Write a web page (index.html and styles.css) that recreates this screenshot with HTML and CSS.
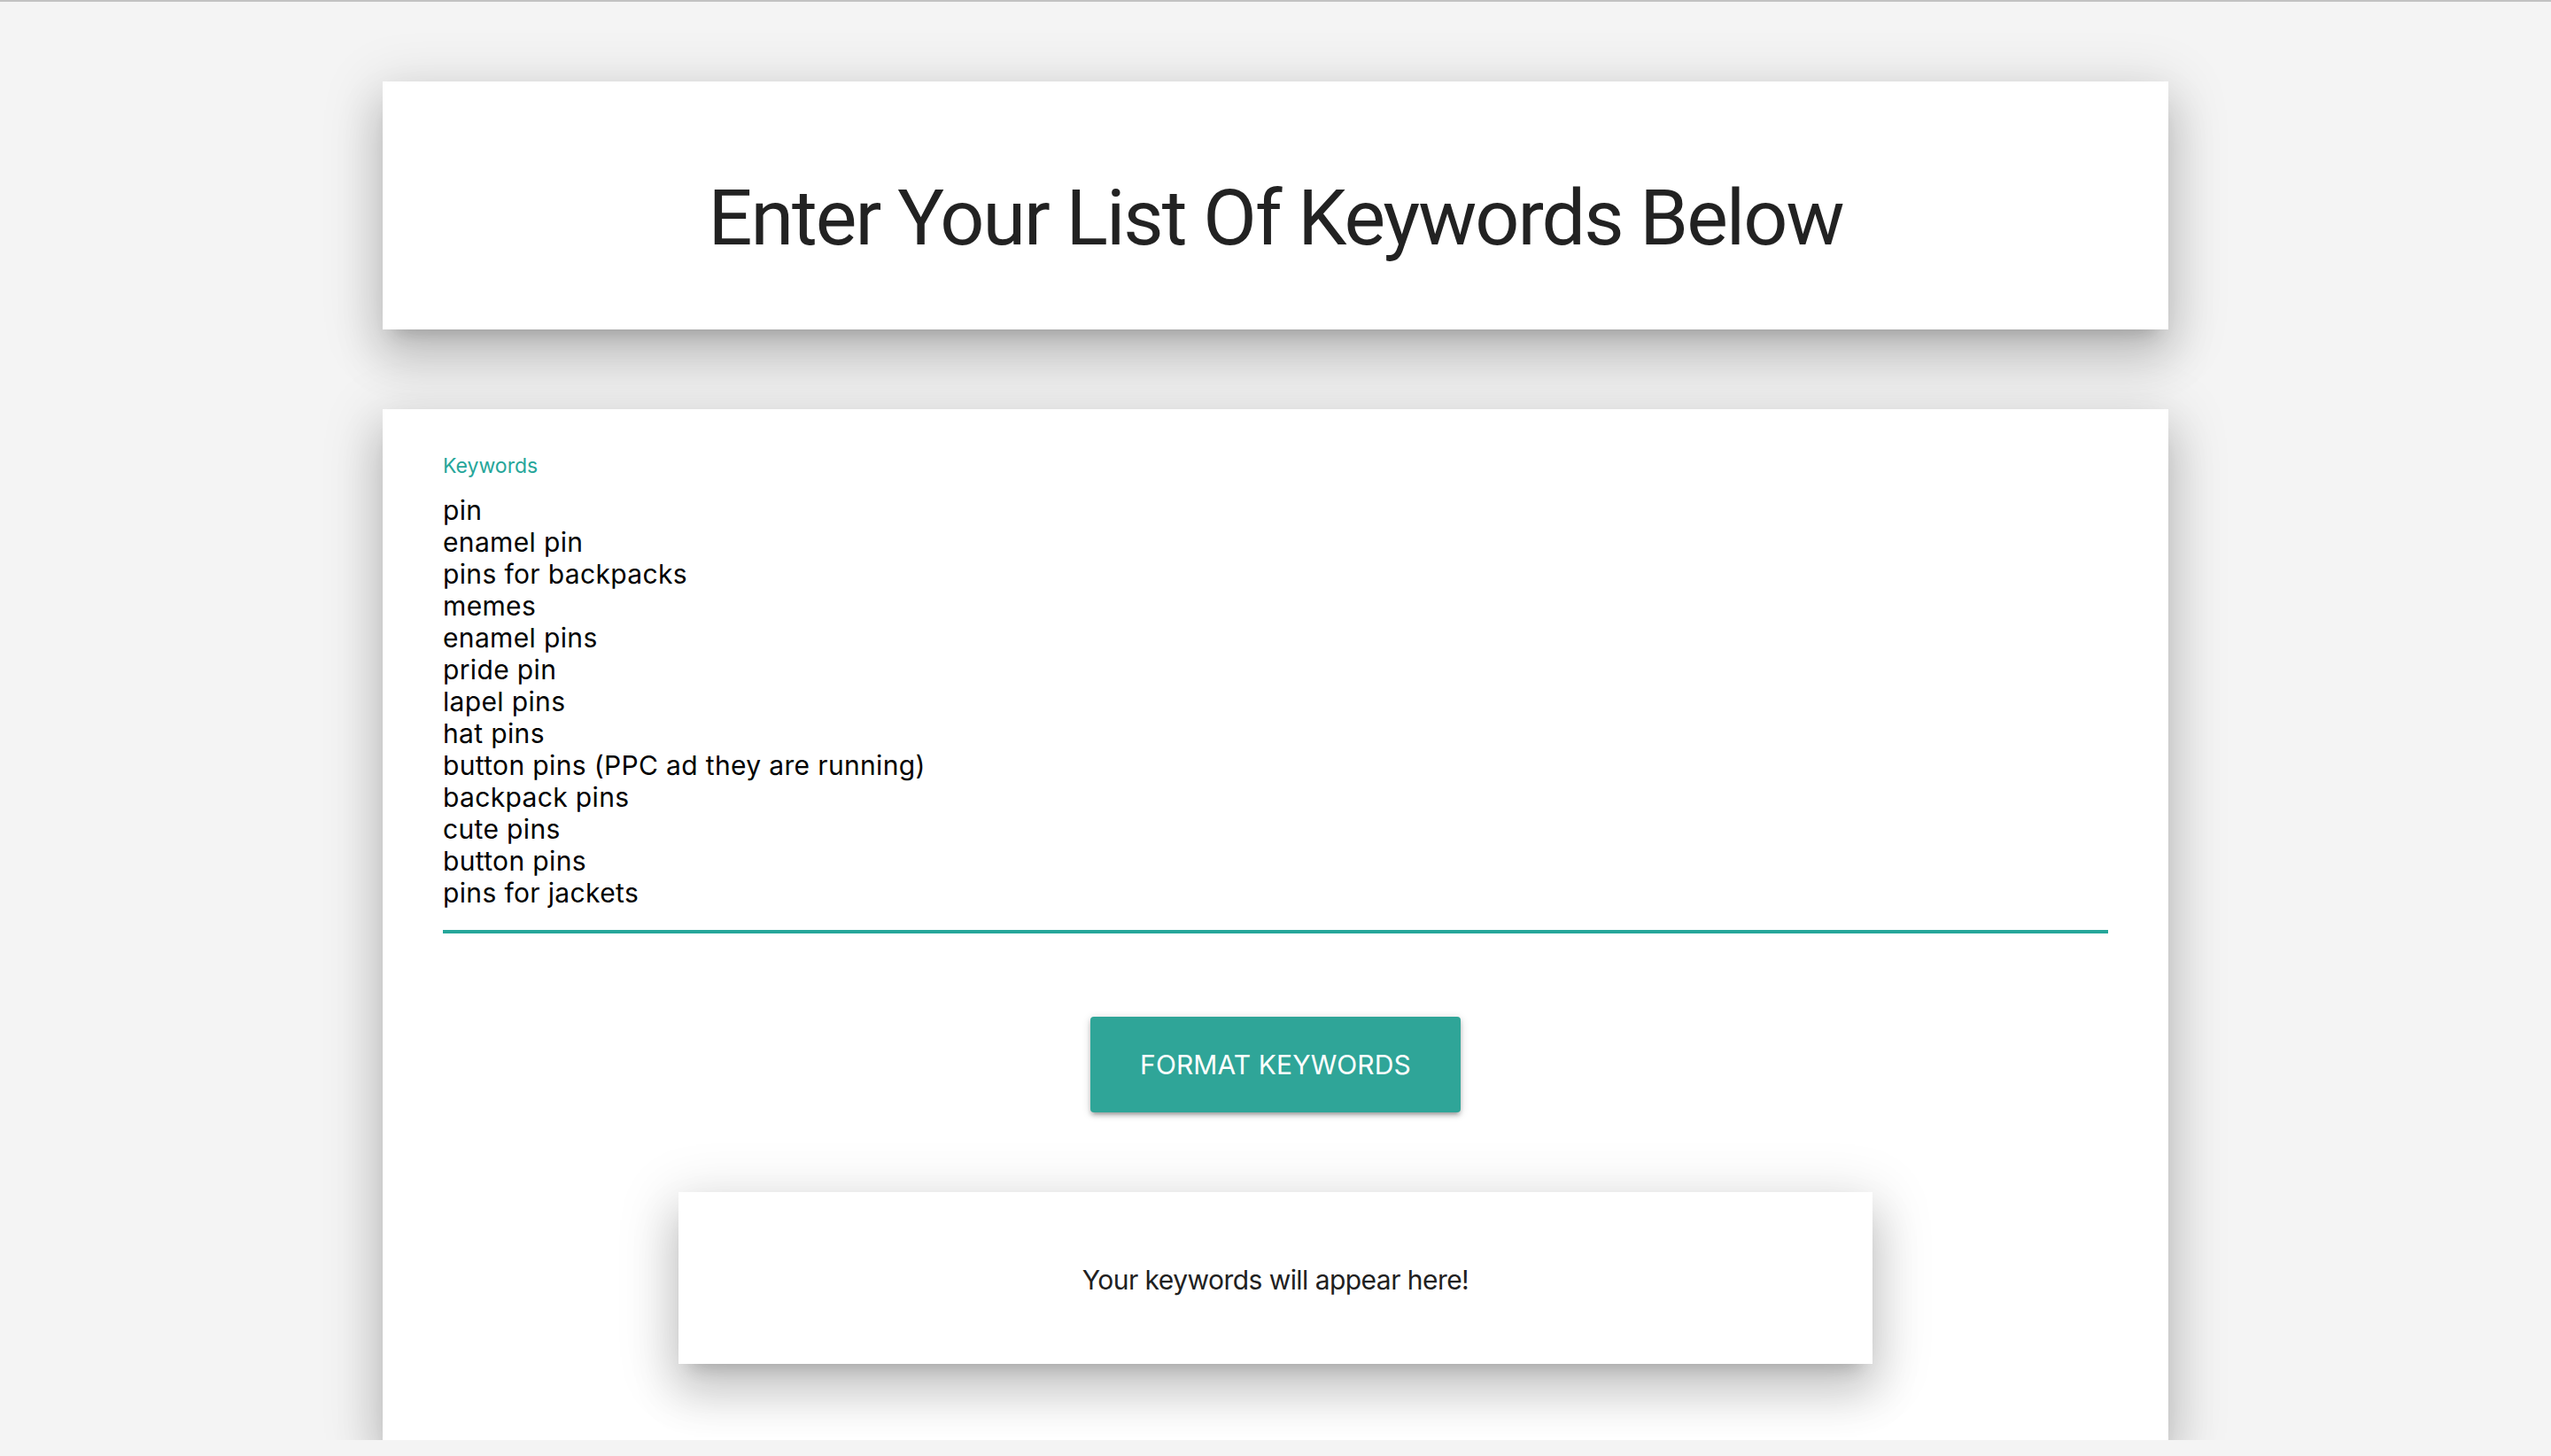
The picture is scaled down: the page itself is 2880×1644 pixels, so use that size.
FILE: index.html
```html
<!DOCTYPE html>
<html lang="en">
<head>
<meta charset="utf-8">
<title>Keyword Formatter</title>
<link rel="stylesheet" href="styles.css">
</head>
<body>
<main class="container">
  <section class="card header-card">
    <h1 class="title">Enter Your List Of Keywords Below</h1>
  </section>
  <section class="card main-card">
    <div class="field">
      <label class="field-label">Keywords</label>
      <div class="field-input">
        <div class="kw">pin</div>
        <div class="kw">enamel pin</div>
        <div class="kw">pins for backpacks</div>
        <div class="kw">memes</div>
        <div class="kw">enamel pins</div>
        <div class="kw">pride pin</div>
        <div class="kw">lapel pins</div>
        <div class="kw">hat pins</div>
        <div class="kw">button pins (PPC ad they are running)</div>
        <div class="kw">backpack pins</div>
        <div class="kw">cute pins</div>
        <div class="kw">button pins</div>
        <div class="kw">pins for jackets</div>
      </div>
    </div>
    <div class="actions">
      <button class="btn" type="button">Format Keywords</button>
    </div>
    <div class="card result-card">
      <p class="result-text">Your keywords will appear here!</p>
    </div>
  </section>
</main>
</body>
</html>
```
FILE: styles.css
```css
html, body {
  margin: 0;
  padding: 0;
}
body {
  background: #f4f4f4;
  border-top: 2px solid #c2c2c2;
  font-family: Inter, "Noto Sans", sans-serif;
  color: rgba(0, 0, 0, 0.87);
}
.container {
  width: 70%;
  margin: 0 auto;
  padding-top: 90px;
}
.card {
  background: #fff;
  box-shadow: 0 32px 48px 4px rgba(0, 0, 0, 0.14),
              0 12px 60px 10px rgba(0, 0, 0, 0.12),
              0 16px 20px -14px rgba(0, 0, 0, 0.2);
}
.header-card {
  padding: 110px 0 82px;
  text-align: center;
}
.title {
  margin: 0;
  font-family: Roboto, "Liberation Sans", sans-serif;
  font-weight: 400;
  font-size: 88px;
  line-height: 88px;
  letter-spacing: -2px;
  color: #222;
}
.main-card {
  margin-top: 90px;
  padding: 50px 68px 86px;
}
.field-label {
  display: block;
  font-size: 23px;
  line-height: 28px;
  color: #26a69a;
}
.field-input {
  margin-top: 18px;
  padding-bottom: 24px;
  border-bottom: 4px solid #26a69a;
  font-size: 30px;
  line-height: 36px;
  letter-spacing: 0.35px;
  color: #000;
}
.actions {
  display: flex;
  justify-content: center;
  margin-top: 94px;
}
.btn {
  height: 108px;
  padding: 0 56px;
  border: none;
  border-radius: 4px;
  background: #2fa598;
  color: #fff;
  font-family: Inter, "Noto Sans", sans-serif;
  font-size: 30px;
  letter-spacing: 0.1px;
  text-transform: uppercase;
  box-shadow: 0 4px 4px 0 rgba(0, 0, 0, 0.14),
              0 6px 2px -4px rgba(0, 0, 0, 0.12),
              0 2px 10px 0 rgba(0, 0, 0, 0.2);
}
.result-card {
  width: 1348px;
  margin: 90px auto 0;
  padding: 81px 0 77px;
  text-align: center;
}
.result-text {
  margin: 0;
  font-size: 30px;
  line-height: 36px;
  letter-spacing: -0.55px;
  color: #212121;
}
```
